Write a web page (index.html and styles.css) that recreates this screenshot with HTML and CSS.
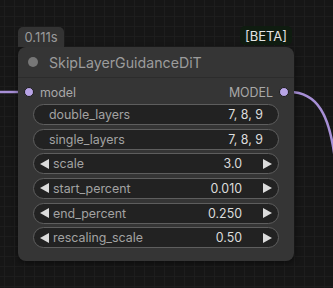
FILE: index.html
```html
<html>
<head>
    <link rel="stylesheet" href="styles.css">
</head>
<body>
<div class="canvas">
  <svg class="wires" width="333" height="288" viewBox="0 0 333 288">
    <path d="M0 92 L24 92" />
    <path d="M289 92 C316 92 331 112 336 170" />
  </svg>

  <div class="node">
    <div class="timing">0.111s</div>
    <div class="beta">[BETA]</div>

    <div class="title">
      <span class="title-dot"></span>
      <span class="title-text">SkipLayerGuidanceDiT</span>
    </div>

    <div class="slots">
      <div class="slot"><span class="slot-dot"></span>model</div>
      <div class="slot out">MODEL<span class="slot-dot"></span></div>
    </div>

    <div class="widgets">
      <div class="widget text"><span class="label">double_layers</span><span class="value">7, 8, 9</span></div>
      <div class="widget text"><span class="label">single_layers</span><span class="value">7, 8, 9</span></div>
      <div class="widget num"><span class="arrow left"></span><span class="label">scale</span><span class="value">3.0</span><span class="arrow right"></span></div>
      <div class="widget num"><span class="arrow left"></span><span class="label">start_percent</span><span class="value">0.010</span><span class="arrow right"></span></div>
      <div class="widget num"><span class="arrow left"></span><span class="label">end_percent</span><span class="value">0.250</span><span class="arrow right"></span></div>
      <div class="widget num"><span class="arrow left"></span><span class="label">rescaling_scale</span><span class="value">0.50</span><span class="arrow right"></span></div>
    </div>
  </div>
</div>
</body>
</html>
```
FILE: styles.css
```css
body { margin: 0; background: #161616; font-family: Inter, "Liberation Sans", sans-serif; }

.canvas {
  position: relative; width: 333px; height: 288px; overflow: hidden;
  background-color: #161616;
  background-image:
    linear-gradient(to right, #1d1d1d 1px, transparent 1px),
    linear-gradient(to bottom, #1d1d1d 1px, transparent 1px);
  background-size: 10px 10px;
  background-position: 4px 6px;
}

.wires { position: absolute; left: 0; top: 0; }
.wires path { fill: none; stroke: #a78fd6; stroke-width: 2.5; }

.node {
  position: absolute; left: 18px; top: 47px; width: 276px; height: 214px;
  background: #353535; border-radius: 8px;
  box-shadow: 0 2px 6px rgba(0,0,0,0.45);
  box-sizing: border-box;
}

.timing {
  position: absolute; left: 0; top: -20px; width: 46px; height: 20px;
  background: #333333; color: #9a9a9a; font-size: 13px;
  border-radius: 5px 5px 0 0;
  display: flex; align-items: center; justify-content: center;
}

.beta {
  position: absolute; left: 222px; top: -21px; width: 52px; height: 19px;
  background: #0f1c10; color: #e4e4e4; font-size: 13px;
  border-radius: 5px;
  display: flex; align-items: center; justify-content: center;
}

.title {
  height: 31px; display: flex; align-items: center;
  border-bottom: 1px solid #2c2c2c; box-sizing: border-box;
}
.title-dot { width: 10px; height: 10px; border-radius: 50%; background: #777; margin: 0 11px 0 10px; }
.title-text { color: #9c9c9c; font-size: 14.2px; }

.slots {
  display: flex; justify-content: space-between; align-items: center;
  height: 20px; margin-top: 4px; padding: 0 5px 0 6px;
  color: #a8a8a8; font-size: 12.4px;
}
.slot { display: flex; align-items: center; }
.slot-dot {
  width: 8px; height: 8px; border-radius: 50%; background: #b8a4e6;
  border: 1px solid #1c1c1c; margin-right: 6px;
}
.slot.out .slot-dot { margin: 0 0 0 6px; }

.widgets { display: flex; flex-direction: column; gap: 3.65px; margin-top: 2px; padding: 0 15px; }

.widget {
  height: 21px; box-sizing: border-box; border: 1px solid #5e5e5e; border-radius: 11px;
  background: #222222; display: flex; align-items: center; font-size: 12.4px;
}
.widget .label { color: #a3a3a3; flex: 1; }
.widget .value { color: #dcdcdc; }
.widget.text { padding: 0 15px; }
.widget.num { padding: 0 6px; }
.widget.num .label { margin-left: 4px; }
.widget.num .value { margin-right: 21px; }

.arrow { width: 0; height: 0; border-top: 5px solid transparent; border-bottom: 5px solid transparent; }
.arrow.left { border-right: 9.5px solid #dcdcdc; }
.arrow.right { border-left: 9.5px solid #dcdcdc; }
```
